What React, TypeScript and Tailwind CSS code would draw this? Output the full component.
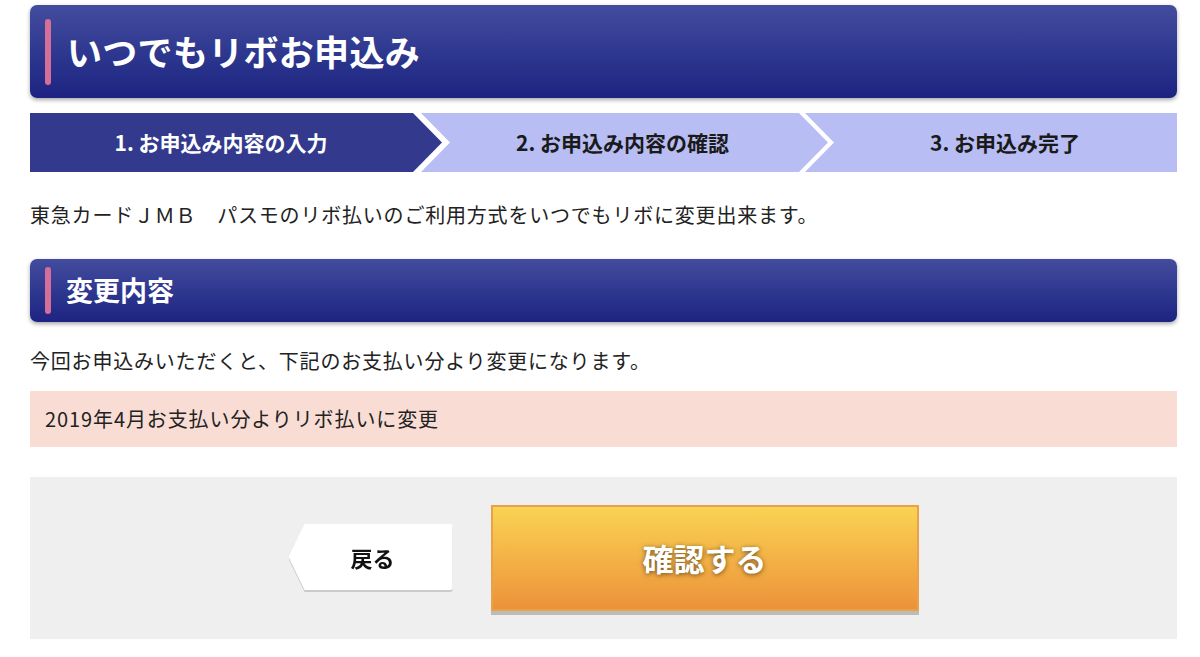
const font = "font-['Noto_Sans_CJK_JP','Noto_Sans',sans-serif]";

function HeadBar({ title, big }: { title: string; big?: boolean }) {
  return (
    <div
      className={`flex items-center rounded-[7px] bg-gradient-to-b from-[#434c9e] to-[#1d2381] shadow-[0_2px_4px_rgba(0,0,0,0.35)] ${
        big ? "h-[93px]" : "h-[63px]"
      }`}
    >
      <span
        className={`ml-[15px] w-[6px] rounded-full bg-[#d56f99] ${big ? "h-[66px]" : "h-[47px]"}`}
      />
      <h1
        className={`font-bold text-white ${
          big ? "ml-[16px] text-[35px] tracking-[0.3px]" : "ml-[15px] text-[27px]"
        }`}
      >
        {title}
      </h1>
    </div>
  );
}

function Steps() {
  return (
    <div className="mt-[15px] flex h-[59px] bg-white text-[21px] font-bold">
      <div className="flex w-[412px] shrink-0 items-center justify-center bg-[#333a8e] pr-[30px] text-white [clip-path:polygon(0_0,calc(100%-29px)_0,100%_50%,calc(100%-29px)_100%,0_100%)]">
        1. お申込み内容の入力
      </div>
      <div className="-ml-[21px] flex w-[407px] shrink-0 items-center justify-center bg-[#b8bdf3] pr-[4px] text-[#1a1a1a] [clip-path:polygon(0_0,calc(100%-29px)_0,100%_50%,calc(100%-29px)_100%,0_100%,29px_50%)]">
        2. お申込み内容の確認
      </div>
      <div className="-ml-[23px] flex flex-1 items-center justify-center bg-[#b8bdf3] pl-[28px] text-[#1a1a1a] [clip-path:polygon(0_0,100%_0,100%_100%,0_100%,29px_50%)]">
        3. お申込み完了
      </div>
    </div>
  );
}

export default function App() {
  return (
    <div className={`min-h-[657px] bg-white ${font} text-[#222]`}>
      <div className="ml-[30px] w-[1147px] pt-[5px]">
        <HeadBar title="いつでもリボお申込み" big />
        <Steps />

        <p className="mt-[28px] text-[20px] leading-[30px] tracking-[0.8px]">
          東急カードＪＭＢ　パスモのリボ払いのご利用方式をいつでもリボに変更出来ます。
        </p>

        <div className="mt-[29px]">
          <HeadBar title="変更内容" />
        </div>

        <p className="mt-[24px] text-[20px] leading-[30px] tracking-[0.8px]">
          今回お申込みいただくと、下記のお支払い分より変更になります。
        </p>

        <div className="mt-[15px] flex h-[56px] items-center bg-[#f9ddd5] pl-[15px] text-[20px] tracking-[0.9px]">
          2019年4月お支払い分よりリボ払いに変更
        </div>

        <div className="mt-[30px] flex h-[162px] items-center justify-center gap-[38px] bg-[#efefef]">
          <div className="mt-[-2px] [filter:drop-shadow(0_2px_0_#c9cccc)]">
            <button className="flex h-[66px] w-[164px] items-center justify-center rounded-r-[3px] bg-white pl-[4px] text-[22px] font-bold text-[#111] [clip-path:polygon(16px_0,100%_0,100%_100%,16px_100%,0_50%)]">
              戻る
            </button>
          </div>
          <button className="h-[106px] w-[428px] border-[2px] border-[#eba04c] bg-gradient-to-b from-[#f9d352] to-[#ec923a] text-[31px] font-bold text-white shadow-[0_4px_0_#bdbbb6] [text-shadow:0_1px_5px_rgba(0,0,0,0.55)]">
            確認する
          </button>
        </div>
      </div>
    </div>
  );
}
